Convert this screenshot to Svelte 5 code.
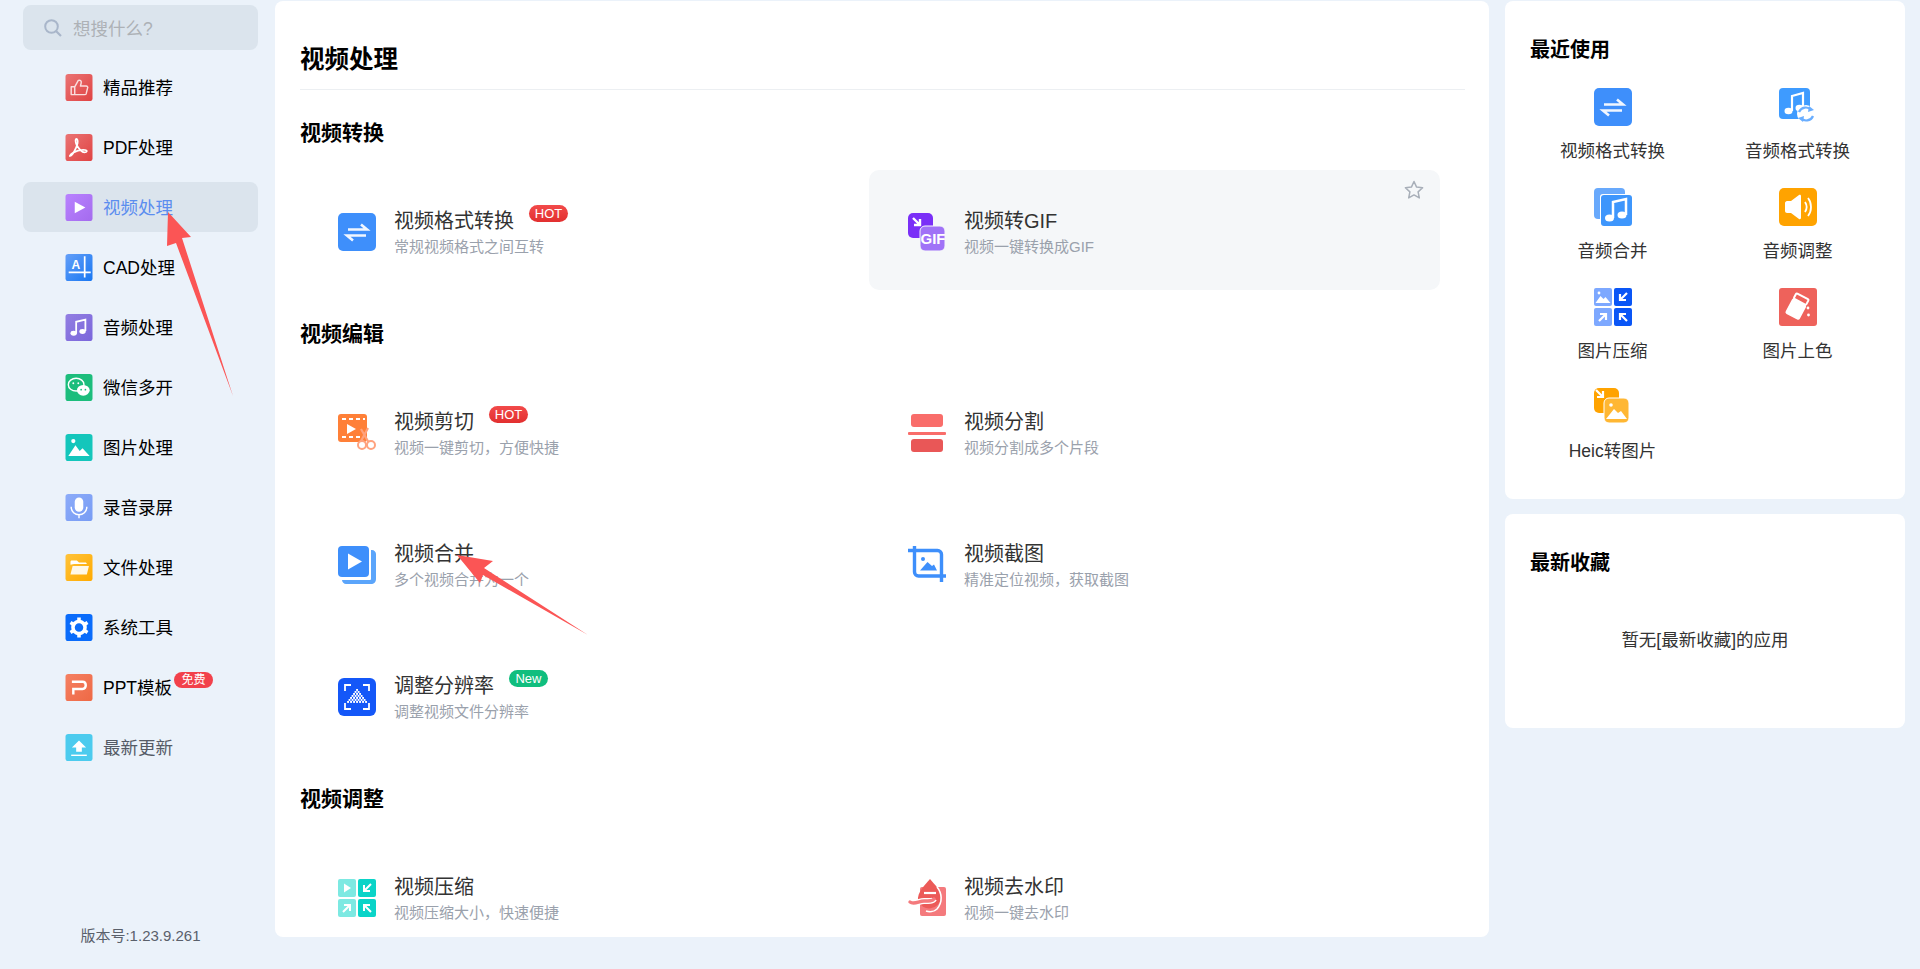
<script>
  const nav = [
    { icon: 'thumb', label: '精品推荐' },
    { icon: 'pdf', label: 'PDF处理' },
    { icon: 'play', label: '视频处理', active: true },
    { icon: 'cad', label: 'CAD处理' },
    { icon: 'music', label: '音频处理' },
    { icon: 'wechat', label: '微信多开' },
    { icon: 'image', label: '图片处理' },
    { icon: 'mic', label: '录音录屏' },
    { icon: 'folder', label: '文件处理' },
    { icon: 'gear', label: '系统工具' },
    { icon: 'ppt', label: 'PPT模板', free: true },
    { icon: 'upload', label: '最新更新', muted: true }
  ];

  const sections = [
    {
      title: '视频转换',
      items: [
        { icon: 'swap', title: '视频格式转换', sub: '常规视频格式之间互转', badge: 'HOT' },
        { icon: 'gif', title: '视频转GIF', sub: '视频一键转换成GIF', hover: true }
      ]
    },
    {
      title: '视频编辑',
      items: [
        { icon: 'cut', title: '视频剪切', sub: '视频一键剪切，方便快捷', badge: 'HOT' },
        { icon: 'split', title: '视频分割', sub: '视频分割成多个片段' },
        { icon: 'merge', title: '视频合并', sub: '多个视频合并为一个' },
        { icon: 'crop', title: '视频截图', sub: '精准定位视频，获取截图' },
        { icon: 'res', title: '调整分辨率', sub: '调整视频文件分辨率', badge: 'New' }
      ]
    },
    {
      title: '视频调整',
      items: [
        { icon: 'vcompress', title: '视频压缩', sub: '视频压缩大小，快速便捷' },
        { icon: 'watermark', title: '视频去水印', sub: '视频一键去水印' }
      ]
    }
  ];

  const recent = [
    { icon: 'swap', label: '视频格式转换' },
    { icon: 'musicswap', label: '音频格式转换' },
    { icon: 'musicmerge', label: '音频合并' },
    { icon: 'volume', label: '音频调整' },
    { icon: 'imgcompress', label: '图片压缩' },
    { icon: 'paint', label: '图片上色' },
    { icon: 'heic', label: 'Heic转图片' }
  ];

  // checker pattern of the resolution icon: a dithered triangle
  const dots = [];
  for (let r = 0; r < 7; r++) {
    for (let c = -r; c <= r; c += 2) {
      dots.push({ x: 19 + c * 1.5 - 0.9, y: 11 + r * 2 });
    }
  }
</script>

{#snippet glyph(name)}
  <svg class="ico" viewBox="0 0 38 38" aria-hidden="true">
    {#if name === 'thumb'}
      <rect width="38" height="38" rx="4" fill="url(#g-red)" />
      <path d="M8 18h5v11H8zM13 18l5-9c3-1 5 1 4 4l-1 4h8c2 0 3 2 2 3l-2 8c-.4 1-1 1-2 1H13" fill="none" stroke="#fff" stroke-opacity=".8" stroke-width="2" stroke-linejoin="round" />
    {:else if name === 'pdf'}
      <rect width="38" height="38" rx="4" fill="url(#g-red)" />
      <path d="M6 31c4-1 9-10 11-18 .6-4-.5-6-1.500-6-2 0-1.500 5 0 8 3 6 8 11 11 11 4 0 5-3 1-3.500-5-.5-12 1-17 4-2 1-4 3-4.500 4.500z" fill="none" stroke="#fff" stroke-width="2.400" stroke-linejoin="round" />
    {:else if name === 'play'}
      <rect width="38" height="38" rx="4" fill="url(#g-purple)" />
      <path d="M13 11l15 8-15 8z" fill="#fff" />
    {:else if name === 'cad'}
      <rect width="38" height="38" rx="4" fill="url(#g-blue)" />
      <text x="8.500" y="21" class="cadtext">A</text>
      <path d="M4.500 26h31M27 3v30" stroke="#fff" stroke-width="2.400" />
    {:else if name === 'music'}
      <rect width="38" height="38" rx="4" fill="url(#g-violet)" />
      <path d="M15 27V11l13-3v16" fill="none" stroke="#fff" stroke-width="2.500" />
      <ellipse cx="11.500" cy="27" rx="4.500" ry="3.500" fill="#fff" /><ellipse cx="24" cy="24.500" rx="4.500" ry="3.500" fill="#fff" />
    {:else if name === 'wechat'}
      <rect width="38" height="38" rx="4" fill="#1cbd7c" />
      <ellipse cx="15" cy="15" rx="11" ry="9" fill="none" stroke="#fff" stroke-width="2" />
      <ellipse cx="25" cy="23" rx="9" ry="7.500" fill="#fff" />
      <circle cx="11" cy="13" r="1.300" fill="#fff" /><circle cx="18" cy="13" r="1.300" fill="#fff" />
      <circle cx="22" cy="22" r="1.200" fill="#1cbd7c" /><circle cx="28" cy="22" r="1.200" fill="#1cbd7c" />
    {:else if name === 'image'}
      <rect width="38" height="38" rx="4" fill="#14c6bb" />
      <circle cx="11" cy="10" r="3" fill="#fff" />
      <path d="M4 31l10-15 6 8 4-4 10 11z" fill="#fff" />
    {:else if name === 'mic'}
      <rect width="38" height="38" rx="4" fill="url(#g-mic)" />
      <rect x="13" y="5" width="12" height="20" rx="6" fill="#fff" />
      <path d="M8 18c0 15 22 15 22 0M19 29v5" fill="none" stroke="#fff" stroke-width="2" />
    {:else if name === 'folder'}
      <rect width="38" height="38" rx="4" fill="url(#g-orange)" />
      <path d="M7 15v-4c0-1 .6-2 2-2h7l3 3h9c1 0 2 1 2 2H12z" fill="#fff" />
      <path d="M10 17h23l-3 12H7z" fill="#fff" opacity=".9" />
    {:else if name === 'gear'}
      <rect width="38" height="38" rx="4" fill="#0a6cfb" />
      <circle cx="19" cy="19" r="8.500" fill="none" stroke="#fff" stroke-width="5" />
      <path d="M19 5v6M19 27v6M7 12l5 3M26 23l5 3M7 26l5-3M26 15l5-3" stroke="#fff" stroke-width="5" />
    {:else if name === 'ppt'}
      <rect width="38" height="38" rx="4" fill="url(#g-ppt)" />
      <path d="M9 11h15c6 0 6 10 0 10H11v8" fill="none" stroke="#fff" stroke-width="3.400" />
    {:else if name === 'upload'}
      <rect width="38" height="38" rx="4" fill="#4ccbee" />
      <path d="M19 9l10 10h-6v6h-8v-6H9z" fill="#fff" /><path d="M8 30h22" stroke="#fff" stroke-width="2" />
    {:else if name === 'swap'}
      <rect width="38" height="38" rx="5" fill="#3e8ffb" />
      <path d="M10 16.500h19l-6-5M28 22.500H9l6 5" fill="none" stroke="#fff" stroke-opacity=".92" stroke-width="2.600" />
    {:else if name === 'gif'}
      <rect x="0" y="0" width="25" height="25" rx="5" fill="#7a2ff7" />
      <path d="M5 5l7 7M12 6v6H6" fill="none" stroke="#fff" stroke-width="2.400" />
      <rect x="12" y="13" width="25" height="25" rx="5" fill="#a072f7" stroke="#f5f7f9" stroke-width="1" />
      <text x="12.500" y="31" class="giftext">GIF</text>
    {:else if name === 'cut'}
      <rect x="0" y="0" width="29" height="28" rx="3" fill="#ff8038" />
      <path d="M4 5h4M11 5h4M18 5h4M25 5h2M4 23h4M11 23h4M18 23h4" stroke="#fff" stroke-width="2" />
      <path d="M9 10l9 5-9 5z" fill="#fff" />
      <path d="M30 14l-8 15M23 15l8 14" stroke="#ffa27e" stroke-width="2.200" />
      <circle cx="24" cy="31" r="4" fill="#fff" stroke="#ffa27e" stroke-width="2" /><circle cx="33" cy="31" r="4" fill="#fff" stroke="#ffa27e" stroke-width="2" />
    {:else if name === 'split'}
      <rect x="3" y="0" width="32" height="13" rx="3" fill="#f96d6a" />
      <rect x="0" y="18" width="38" height="3" rx="1" fill="#f96d6a" />
      <rect x="3" y="25" width="32" height="13" rx="3" fill="#e95757" />
    {:else if name === 'merge'}
      <path d="M33 4h1c2 0 4 2 4 4v25c0 3-2 5-5 5H8c-2 0-4-2-4-4h28c1 0 1-1 1-1z" fill="#5ba5fb" />
      <rect width="31" height="31" rx="4" fill="#3e8ffb" />
      <path d="M10 7.500l14 8-14 8z" fill="#fff" />
    {:else if name === 'crop'}
      <path d="M6.500 0v26a4 4 0 0 0 4 4H38M0 4.500h29.500a4 4 0 0 1 4 4V36" fill="none" stroke="#3e8ffb" stroke-width="3.400" />
      <circle cx="15" cy="13" r="2" fill="#3e8ffb" />
      <path d="M12 24.500l7.500-8.500 4.500 4 2-1.500 3 6z" fill="#3e8ffb" />
    {:else if name === 'res'}
      <rect width="38" height="38" rx="6" fill="#1457f8" />
      <path d="M7 13V7h6M25 7h6v6M31 25v6h-6M13 31H7v-6" fill="none" stroke="#fff" stroke-width="1.800" />
      {#each dots as d}
        <rect x={d.x} y={d.y} width="1.900" height="1.900" fill="#fff" />
      {/each}
    {:else if name === 'vcompress'}
      <rect x="0" y="0" width="18" height="18" rx="2" fill="#7de9e2" />
      <rect x="20" y="0" width="18" height="18" rx="2" fill="#0ad4c8" />
      <rect x="0" y="20" width="18" height="18" rx="2" fill="#7de9e2" />
      <rect x="20" y="20" width="18" height="18" rx="2" fill="#0ad4c8" />
      <path d="M6 4.500l7 4.500-7 4.500z" fill="#fff" />
      <path d="M33 5l-7 7M26 6v6h6M5 33l7-7M6 26h6v6M33 33l-7-7M26 32v-6h6" fill="none" stroke="#fff" stroke-width="2" />
    {:else if name === 'watermark'}
      <rect x="12" y="8" width="26" height="29" rx="2" fill="#f47a7d" />
      <path d="M22 0c5 6 11 11 11 19a12 12 0 0 1-23 3C9 13 17 6 22 0z" fill="#ec5a58" />
      <path d="M29 8c5 6 6 15 0 22-3 3-8 3-11 2" fill="none" stroke="#fff" stroke-width="1.600" />
      <path d="M16 14h12" stroke="#fff" stroke-width="2.200" />
      <path d="M2 23c4 3 9-1 14-1s9 0 10-2" fill="none" stroke="#fff" stroke-width="6" />
      <path d="M2 23c4 3 9-1 14-1s9 0 10-2" fill="none" stroke="#f47a7d" stroke-width="3.400" stroke-linecap="round" />
    {:else if name === 'musicswap'}
      <rect width="31" height="31" rx="4" fill="#3e9bff" />
      <path d="M13 23V8l11-3v15" fill="none" stroke="#fff" stroke-width="2.200" />
      <ellipse cx="9.500" cy="23" rx="4" ry="3.300" fill="#fff" /><ellipse cx="20.500" cy="20" rx="4" ry="3.300" fill="#fff" />
      <circle cx="27" cy="26" r="9" fill="#fff" />
      <path d="M20 24c2-5 9-6 12-2M34 28c-2 5-9 6-12 2" fill="none" stroke="#6aaeff" stroke-width="2.200" />
      <path d="M30 18l5 4-6 2zM24 34l-5-4 6-2z" fill="#6aaeff" />
    {:else if name === 'musicmerge'}
      <rect width="31" height="31" rx="4" fill="#68a9fc" />
      <rect x="6" y="6" width="32" height="32" rx="3" fill="#fff" />
      <rect x="7" y="7" width="31" height="31" rx="3" fill="#3e96fc" />
      <path d="M19 30V14l13-3v16" fill="none" stroke="#fff" stroke-width="2.500" />
      <ellipse cx="15.500" cy="30" rx="4.500" ry="3.500" fill="#fff" /><ellipse cx="28" cy="27" rx="4.500" ry="3.500" fill="#fff" />
    {:else if name === 'volume'}
      <rect width="38" height="38" rx="5" fill="#ffa300" />
      <path d="M6 15c0-1 1-2 2-2h4l8-6c1-.5 2 0 2 1v22c0 1-1 1.500-2 1l-8-6H8c-1 0-2-1-2-2z" fill="#fff" />
      <path d="M26 14c2 3 2 7 0 10M29 10c4 5 4 13 0 18" fill="none" stroke="#fff" stroke-width="1.800" />
    {:else if name === 'imgcompress'}
      <rect x="0" y="0" width="18" height="18" rx="2" fill="#7da8ff" />
      <rect x="20" y="0" width="18" height="18" rx="2" fill="#0a56f6" />
      <rect x="0" y="20" width="18" height="18" rx="2" fill="#7da8ff" />
      <rect x="20" y="20" width="18" height="18" rx="2" fill="#0a56f6" />
      <circle cx="5" cy="5" r="1.400" fill="#fff" /><path d="M1.500 15l5-7 3 3 2-2 5 6z" fill="#fff" />
      <path d="M33 5l-7 7M26 6v6h6M5 33l7-7M6 26h6v6M33 33l-7-7M26 32v-6h6" fill="none" stroke="#fff" stroke-width="2.200" />
    {:else if name === 'paint'}
      <rect width="38" height="38" rx="3" fill="#ee625b" />
      <g transform="rotate(28 18 19)">
        <rect x="10" y="13" width="16" height="17" rx="2" fill="#fff" />
        <rect x="11" y="7" width="14" height="6" rx="1" fill="none" stroke="#fff" stroke-width="2" />
      </g>
      <circle cx="29" cy="20" r="1.400" fill="#fff" /><circle cx="29.500" cy="27" r="1.400" fill="#fff" />
    {:else if name === 'heic'}
      <rect width="25" height="25" rx="5" fill="#ffa300" />
      <path d="M2 2l7 7M9 3v6H3" fill="none" stroke="#fff" stroke-width="2.200" />
      <rect x="10" y="10" width="25" height="25" rx="5" fill="#ffb733" stroke="#fff" stroke-width="1" />
      <circle cx="17" cy="17" r="1.800" fill="#fff" /><path d="M12 31l8-10 4 4 3-2 6 8z" fill="#fff" />
    {/if}
  </svg>
{/snippet}

<div class="page">
  <svg class="defs" aria-hidden="true">
    <defs>
      <linearGradient id="g-red" x1="0" y1="0" x2="1" y2="1"><stop offset="0" stop-color="#ea7474" /><stop offset="1" stop-color="#e04343" /></linearGradient>
      <linearGradient id="g-purple" x1="0" y1="0" x2="1" y2="1"><stop offset="0" stop-color="#b982ff" /><stop offset="1" stop-color="#a46bee" /></linearGradient>
      <linearGradient id="g-blue" x1="0" y1="0" x2="1" y2="1"><stop offset="0" stop-color="#649ff8" /><stop offset="1" stop-color="#1877f2" /></linearGradient>
      <linearGradient id="g-violet" x1="0" y1="0" x2="1" y2="1"><stop offset="0" stop-color="#937fe2" /><stop offset="1" stop-color="#7a66db" /></linearGradient>
      <linearGradient id="g-mic" x1="0" y1="0" x2="1" y2="1"><stop offset="0" stop-color="#8cabf9" /><stop offset="1" stop-color="#789cf4" /></linearGradient>
      <linearGradient id="g-orange" x1="0" y1="0" x2="1" y2="1"><stop offset="0" stop-color="#ffc33a" /><stop offset="1" stop-color="#ffaa00" /></linearGradient>
      <linearGradient id="g-ppt" x1="0" y1="0" x2="1" y2="1"><stop offset="0" stop-color="#f58062" /><stop offset="1" stop-color="#ee6945" /></linearGradient>
    </defs>
  </svg>

  <aside class="sidebar">
    <div class="search">
      <svg class="searchico" viewBox="0 0 18 18" aria-hidden="true">
        <circle cx="7.500" cy="7.500" r="6.300" fill="none" stroke="#a9b6ca" stroke-width="2" />
        <path d="M12 12l5 5" stroke="#a9b6ca" stroke-width="2.200" />
      </svg>
      <span>想搜什么?</span>
    </div>
    <nav class="nav">
      {#each nav as n}
        <div class="navitem" class:active={n.active} class:muted={n.muted}>
          <span class="navicon">{@render glyph(n.icon)}</span>
          <span class="navlabel">{n.label}</span>
          {#if n.free}<span class="free">免费</span>{/if}
        </div>
      {/each}
    </nav>
    <div class="version">版本号:1.23.9.261</div>
  </aside>

  <main class="main">
    <h1>视频处理</h1>
    {#each sections as s}
      <section>
        <h2>{s.title}</h2>
        <div class="grid">
          {#each s.items as it}
            <div class="card" class:hover={it.hover}>
              <span class="cardicon">{@render glyph(it.icon)}</span>
              <div class="cardtext">
                <div class="cardtitle">
                  <span>{it.title}</span>
                  {#if it.badge}<span class="badge" class:new={it.badge === 'New'}>{it.badge}</span>{/if}
                </div>
                <div class="cardsub">{it.sub}</div>
              </div>
              {#if it.hover}
                <svg class="star" viewBox="0 0 20 20" aria-hidden="true">
                  <path d="M10 1.500l2.600 5.600 6 .7-4.500 4.100 1.200 6L10 14.900l-5.300 3 1.200-6L1.400 7.800l6-.7z" fill="none" stroke="#a8afb9" stroke-width="1.500" stroke-linejoin="round" />
                </svg>
              {/if}
            </div>
          {/each}
        </div>
      </section>
    {/each}
  </main>

  <div class="right">
    <div class="panel recent">
      <h3>最近使用</h3>
      <div class="recentgrid">
        {#each recent as r}
          <div class="recentitem">
            <span class="cardicon">{@render glyph(r.icon)}</span>
            <span class="recentlabel">{r.label}</span>
          </div>
        {/each}
      </div>
    </div>
    <div class="panel fav">
      <h3>最新收藏</h3>
      <p>暂无[最新收藏]的应用</p>
    </div>
  </div>

  <svg class="arrows" viewBox="0 0 1920 969" aria-hidden="true">
    <path d="M168 212l23 25-9 1 51 158-57-153-9 3z" fill="#fb5555" />
    <path d="M457 555l36 6-9 7 104 67-105-60-3 8z" fill="#fb5555" />
  </svg>
</div>

<style>
  :global(body) {
    margin: 0;
    background: #ebf2fa;
    overflow: hidden;
  }
  .page {
    position: relative;
    display: flex;
    height: 969px;
    overflow: hidden;
    background: #ebf2fa;
    font-family: "Liberation Sans", "Noto Sans CJK SC", sans-serif;
    color: #333;
  }
  .defs {
    position: absolute;
    width: 0;
    height: 0;
  }
  .sidebar {
    box-sizing: border-box;
    flex: none;
    width: 275px;
    padding: 5px 17px 24px 23px;
    display: flex;
    flex-direction: column;
  }
  .search {
    display: flex;
    align-items: center;
    gap: 11px;
    height: 45px;
    padding-left: 21px;
    border-radius: 8px;
    background: #dbe4ed;
    color: #adb1b6;
    font-size: 17.500px;
  }
  .searchico {
    width: 18px;
    height: 18px;
  }
  .nav {
    margin-top: 12px;
    display: flex;
    flex-direction: column;
    gap: 10px;
  }
  .navitem {
    display: flex;
    align-items: center;
    height: 50px;
    padding-left: 42px;
    border-radius: 8px;
    color: #000;
    font-size: 17.500px;
  }
  .navlabel {
    margin-top: -2px;
  }
  .navitem.active {
    background: #dbe4ed;
    color: #5b8def;
  }
  .navitem.muted {
    color: #555b66;
  }
  .navicon {
    display: block;
    width: 28px;
    height: 27px;
    margin-right: 10px;
  }
  .navicon .ico {
    display: block;
    width: 28px;
    height: 27px;
  }
  .free {
    width: 39px;
    height: 16px;
    margin: -15px 0 0 2px;
    border-radius: 9px;
    background: #f2414b;
    color: #fff;
    font-size: 12px;
    line-height: 16px;
    text-align: center;
  }
  .version {
    margin-top: auto;
    color: #5a606b;
    font-size: 15px;
    text-align: center;
  }
  .main {
    box-sizing: border-box;
    flex: none;
    width: 1214px;
    height: 936px;
    margin: 1px 16px 0 0;
    padding: 40px 24px 0 25px;
    border-radius: 8px;
    background: #fff;
    overflow: hidden;
  }
  h1 {
    margin: 0 0 28px;
    height: 38px;
    padding-bottom: 10px;
    border-bottom: 1px solid #eceff2;
    color: #000;
    font-size: 24.500px;
    line-height: 38px;
    font-weight: 700;
  }
  section {
    margin-bottom: 29px;
  }
  h2 {
    margin: 0 0 22px;
    color: #000;
    font-size: 21px;
    line-height: 30px;
    font-weight: 700;
  }
  .grid {
    display: grid;
    grid-template-columns: 569px 571px;
    grid-auto-rows: 120px;
    row-gap: 12px;
  }
  .card {
    position: relative;
    display: flex;
    align-items: flex-start;
    gap: 18px;
    padding: 43px 0 0 38px;
    border-radius: 10px;
  }
  .card:nth-child(even) {
    padding-left: 39px;
  }
  .card.hover {
    background: #f5f7f9;
  }
  .cardicon {
    display: block;
    flex: none;
    width: 38px;
    height: 38px;
  }
  .ico {
    display: block;
    width: 38px;
    height: 38px;
    overflow: visible;
  }
  .cardtext {
    margin-top: -5px;
  }
  .cardtitle {
    display: flex;
    align-items: flex-start;
    color: #333;
    font-size: 20px;
    line-height: 26px;
  }
  .badge {
    box-sizing: border-box;
    width: 39px;
    height: 17px;
    margin: -3px 0 0 15px;
    border-radius: 9px;
    background: linear-gradient(#f24a4a, #e22f2f);
    color: #fff;
    font-size: 13px;
    line-height: 17px;
    text-align: center;
  }
  .badge.new {
    background: #10be7e;
  }
  .cardsub {
    margin-top: 3px;
    color: #9aa1ac;
    font-size: 15px;
    line-height: 20px;
  }
  .star {
    position: absolute;
    top: 10px;
    right: 16px;
    width: 20px;
    height: 20px;
  }
  .cadtext {
    fill: #fff;
    font-size: 17px;
    font-weight: 700;
  }
  .giftext {
    fill: #fff;
    font-size: 15px;
    font-weight: 700;
  }
  .right {
    flex: none;
    width: 400px;
    margin-top: 1px;
    display: flex;
    flex-direction: column;
    gap: 15px;
  }
  .panel {
    box-sizing: border-box;
    border-radius: 8px;
    background: #fff;
  }
  h3 {
    margin: 0;
    color: #000;
    font-size: 20px;
    line-height: 28px;
    font-weight: 700;
  }
  .recent {
    height: 498px;
    padding: 35px 15px 0 15px;
  }
  .recent h3 {
    padding-left: 10px;
  }
  .recentgrid {
    display: grid;
    grid-template-columns: 185px 185px;
    grid-auto-rows: 100px;
    margin-top: 24px;
    justify-content: start;
  }
  .recentitem {
    display: flex;
    flex-direction: column;
    align-items: center;
  }
  .recentlabel {
    margin-top: 12px;
    color: #333;
    font-size: 17.500px;
    line-height: 26px;
  }
  .fav {
    height: 214px;
    padding: 35px 25px 0;
  }
  .fav p {
    margin: 50px 0 0;
    color: #333;
    font-size: 17.500px;
    line-height: 26px;
    text-align: center;
  }
  .arrows {
    position: absolute;
    inset: 0;
    width: 1920px;
    height: 969px;
    pointer-events: none;
  }
</style>
